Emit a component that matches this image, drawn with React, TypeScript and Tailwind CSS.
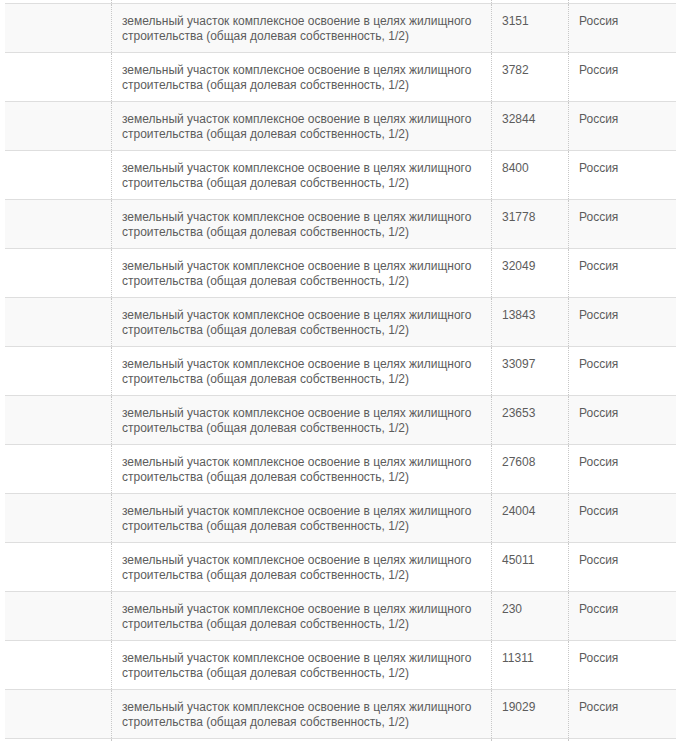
const AREAS = [
  '3151', '3782', '32844', '8400', '31778', '32049', '13843', '33097',
  '23653', '27608', '24004', '45011', '230', '11311', '19029',
]

const LABEL = 'земельный участок комплексное освоение в целях жилищного строительства (общая долевая собственность, 1/2)'

const cell = 'border-l border-dotted border-[#c8c8c8]'

export default function App() {
  return (
    <div className="min-h-[741px] bg-white pl-[5px] pr-[3px] font-['Liberation_Sans',Arial,sans-serif] text-[12px] leading-[15px] text-[#5c5c5c]">
      {/* tail of the previous row, cut off by the crop */}
      <div className="flex h-[3px]">
        <div className="w-[106px]" />
        <div className={`w-[380px] ${cell}`} />
        <div className={`w-[77px] ${cell}`} />
        <div className={`flex-1 ${cell}`} />
      </div>
      {AREAS.map((area, i) => (
        <div
          key={i}
          className={`flex h-[49px] border-t border-[#dedede] ${i % 2 === 0 ? 'bg-[#f9f9f9]' : 'bg-white'}`}
        >
          <div className="w-[106px]" />
          <div className={`w-[380px] px-[10px] pt-[10px] ${cell}`}>{LABEL}</div>
          <div className={`w-[77px] px-[10px] pt-[10px] ${cell}`}>{area}</div>
          <div className={`flex-1 px-[10px] pt-[10px] ${cell}`}>Россия</div>
        </div>
      ))}
      <div className="flex h-[3px] border-t border-[#dedede]">
        <div className="w-[106px]" />
        <div className={`w-[380px] ${cell}`} />
        <div className={`w-[77px] ${cell}`} />
        <div className={`flex-1 ${cell}`} />
      </div>
    </div>
  )
}
